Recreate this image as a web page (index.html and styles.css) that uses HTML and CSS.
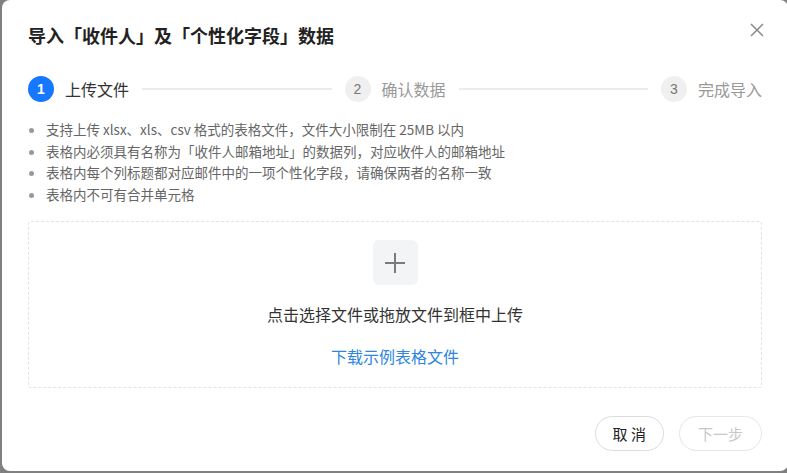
FILE: index.html
```html
<!DOCTYPE html>
<html>

<head>
    <meta charset="UTF-8">
    <title>导入数据</title>
    <link rel="stylesheet" href="styles.css">
</head>

<body>
    <div class="dialog">
        <h1 class="title">导入「收件人」及「个性化字段」数据</h1>
        <button class="close" type="button">
            <svg width="14" height="14" viewBox="0 0 14 14">
                <path d="M1 1 L13 13 M13 1 L1 13" stroke="#8a8a8a" stroke-width="1.5" fill="none" />
            </svg>
        </button>

        <div class="steps">
            <div class="step active"><span class="num">1</span><span class="label">上传文件</span></div>
            <div class="bar"></div>
            <div class="step"><span class="num">2</span><span class="label">确认数据</span></div>
            <div class="bar"></div>
            <div class="step"><span class="num">3</span><span class="label">完成导入</span></div>
        </div>

        <ul class="tips">
            <li>支持上传 xlsx、xls、csv 格式的表格文件，文件大小限制在 25MB 以内</li>
            <li>表格内必须具有名称为「收件人邮箱地址」的数据列，对应收件人的邮箱地址</li>
            <li>表格内每个列标题都对应邮件中的一项个性化字段，请确保两者的名称一致</li>
            <li>表格内不可有合并单元格</li>
        </ul>

        <div class="drop">
            <div class="plus">
                <svg width="22" height="22" viewBox="0 0 22 22">
                    <path d="M11 1 V21 M1 11 H21" stroke="#7a7a7a" stroke-width="2" fill="none" />
                </svg>
            </div>
            <p class="hint">点击选择文件或拖放文件到框中上传</p>
            <a class="sample" href="#">下载示例表格文件</a>
        </div>

        <div class="footer">
            <button class="btn" type="button">取 消</button>
            <button class="btn disabled" type="button">下一步</button>
        </div>
    </div>
</body>

</html>
```

FILE: styles.css
```css
html,
body {
    margin: 0;
    height: 100%;
    overflow: hidden;
    background-color: #808080;
    font-family: "Noto Sans CJK SC", "Liberation Sans", sans-serif;
}

.dialog {
    position: relative;
    box-sizing: border-box;
    width: 786px;
    height: 471px;
    margin-left: 2px;
    padding: 22px 26px 0;
    background: #fff;
    border-radius: 8px;
}

.title {
    margin: 0;
    font-size: 18px;
    line-height: 26px;
    font-weight: bold;
    color: #222;
}

.close {
    position: absolute;
    top: 23px;
    right: 24px;
    padding: 0;
    border: 0;
    background: none;
    line-height: 0;
}

/* etapas */
.steps {
    display: flex;
    align-items: center;
    margin-top: 28px;
    height: 26px;
}

.step {
    display: flex;
    align-items: center;
}

.num {
    display: flex;
    align-items: center;
    justify-content: center;
    width: 26px;
    height: 26px;
    border-radius: 50%;
    background: #f0f0f0;
    color: #777;
    font-size: 14px;
    font-family: "Liberation Sans", sans-serif;
}

.label {
    margin-left: 11px;
    font-size: 16px;
    color: #999;
}

.step.active .num {
    background: #1677ff;
    color: #fff;
    font-weight: bold;
}

.step.active .label {
    color: #333;
}

.bar {
    flex: 1;
    height: 2px;
    margin: 0 13px;
    background: #ebebeb;
}

/* dicas */
.tips {
    margin: 17px 0 0;
    padding-left: 18px;
    font-size: 13.5px;
    line-height: 21.5px;
    color: #666;
}

.tips li::marker {
    color: #999;
}

/* area de upload */
.drop {
    display: flex;
    flex-direction: column;
    align-items: center;
    margin-top: 16px;
    padding: 18px 0 20px;
    border: 1px dashed #e3e3e3;
    border-radius: 3px;
}

.plus {
    display: flex;
    align-items: center;
    justify-content: center;
    width: 45px;
    height: 45px;
    border-radius: 6px;
    background: #f3f4f5;
}

.hint {
    margin: 18px 0 0;
    font-size: 16px;
    line-height: 22px;
    color: #333;
}

.sample {
    margin-top: 20px;
    font-size: 16px;
    line-height: 22px;
    color: #2e86de;
    text-decoration: none;
}

/* rodape */
.footer {
    display: flex;
    justify-content: flex-end;
    gap: 15px;
    margin-top: 28px;
}

.btn {
    height: 35px;
    padding: 0 17px;
    border: 1px solid #dcdcdc;
    border-radius: 18px;
    background: #fff;
    font-family: inherit;
    font-size: 15px;
    color: #222;
}

.btn.disabled {
    padding: 0 18px;
    border-color: #e6e6e6;
    color: #c8c8c8;
}
```
